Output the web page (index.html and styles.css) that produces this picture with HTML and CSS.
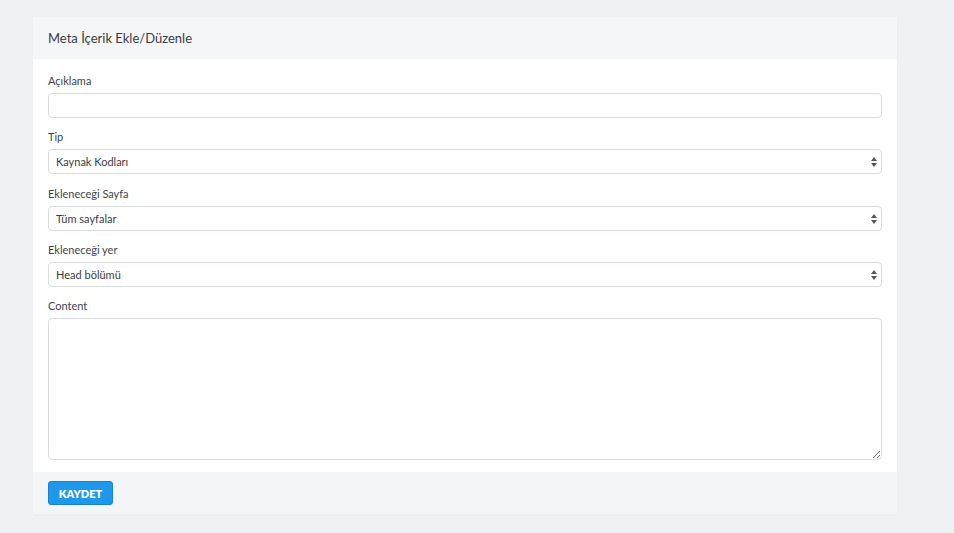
FILE: index.html
```html
<!DOCTYPE html>
<html lang="tr">
<head>
<meta charset="utf-8">
<title>Meta İçerik Ekle/Düzenle</title>
<link rel="stylesheet" href="styles.css">
</head>
<body>
<div class="page">
  <div class="card">
    <div class="card-head">Meta İçerik Ekle/Düzenle</div>
    <form class="card-body">
      <div class="group">
        <label class="lbl">Açıklama</label>
        <input class="ctl" type="text">
      </div>
      <div class="group">
        <label class="lbl">Tip</label>
        <div class="sel">
          <select class="ctl"><option>Kaynak Kodları</option></select>
          <svg class="arr" width="6" height="10" viewBox="0 0 6 10"><path d="M3 0 L6 4 L0 4 Z M0 6 L6 6 L3 10 Z" fill="#555"/></svg>
        </div>
      </div>
      <div class="group">
        <label class="lbl">Ekleneceği Sayfa</label>
        <div class="sel">
          <select class="ctl"><option>Tüm sayfalar</option></select>
          <svg class="arr" width="6" height="10" viewBox="0 0 6 10"><path d="M3 0 L6 4 L0 4 Z M0 6 L6 6 L3 10 Z" fill="#555"/></svg>
        </div>
      </div>
      <div class="group">
        <label class="lbl">Ekleneceği yer</label>
        <div class="sel">
          <select class="ctl"><option>Head bölümü</option></select>
          <svg class="arr" width="6" height="10" viewBox="0 0 6 10"><path d="M3 0 L6 4 L0 4 Z M0 6 L6 6 L3 10 Z" fill="#555"/></svg>
        </div>
      </div>
      <div class="group last">
        <label class="lbl">Content</label>
        <textarea class="ctl area"></textarea>
      </div>
    </form>
    <div class="card-foot">
      <button class="btn" type="button">KAYDET</button>
    </div>
  </div>
</div>
</body>
</html>
```

FILE: styles.css
```css
html, body {
  margin: 0;
  padding: 0;
  background: #f0f1f5;
  font-family: "Lato", "Noto Sans", sans-serif;
  color: #3f4047;
}
.page {
  padding: 17px 57px 19px 33px;
}
.card {
  background: #fff;
  box-shadow: 0 1px 2px rgba(0,0,0,0.04);
}
.card-head {
  height: 42px;
  background: #f5f6f8;
  padding: 0 15px;
  display: flex;
  align-items: center;
  font-size: 13px;
  color: #3a3b42;
}
.card-body {
  padding: 15px 15px 12px 15px;
  display: flex;
  flex-direction: column;
}
.group {
  display: flex;
  flex-direction: column;
  margin-bottom: 12.34px;
}
.group.last {
  margin-bottom: 0;
}
.lbl {
  font-size: 11px;
  line-height: 14px;
  height: 14px;
  margin-bottom: 5px;
  color: #41434b;
}
.ctl {
  box-sizing: border-box;
  width: 100%;
  height: 25px;
  border: 1px solid #d9dbe3;
  border-radius: 4px;
  background: #fff;
  font-family: "Lato", "Noto Sans", sans-serif;
  font-size: 11px;
  color: #3a3b42;
  padding: 0 7px;
  margin: 0;
  outline: none;
}
.sel {
  position: relative;
}
select.ctl {
  -webkit-appearance: none;
  appearance: none;
  display: block;
}
.arr {
  position: absolute;
  right: 5px;
  top: 8px;
}
.area {
  height: 142px;
  resize: vertical;
  display: block;
}
.card-foot {
  height: 42px;
  background: #f4f5f7;
  padding: 0 15px;
  display: flex;
  align-items: center;
}
.btn {
  width: 65px;
  height: 24px;
  background: #1e98ea;
  border: 1px solid #1882d0;
  border-radius: 3px;
  color: #fff;
  font-family: "Lato", "Noto Sans", sans-serif;
  font-weight: 800;
  font-size: 11px;
  padding: 0;
  cursor: pointer;
}
```
